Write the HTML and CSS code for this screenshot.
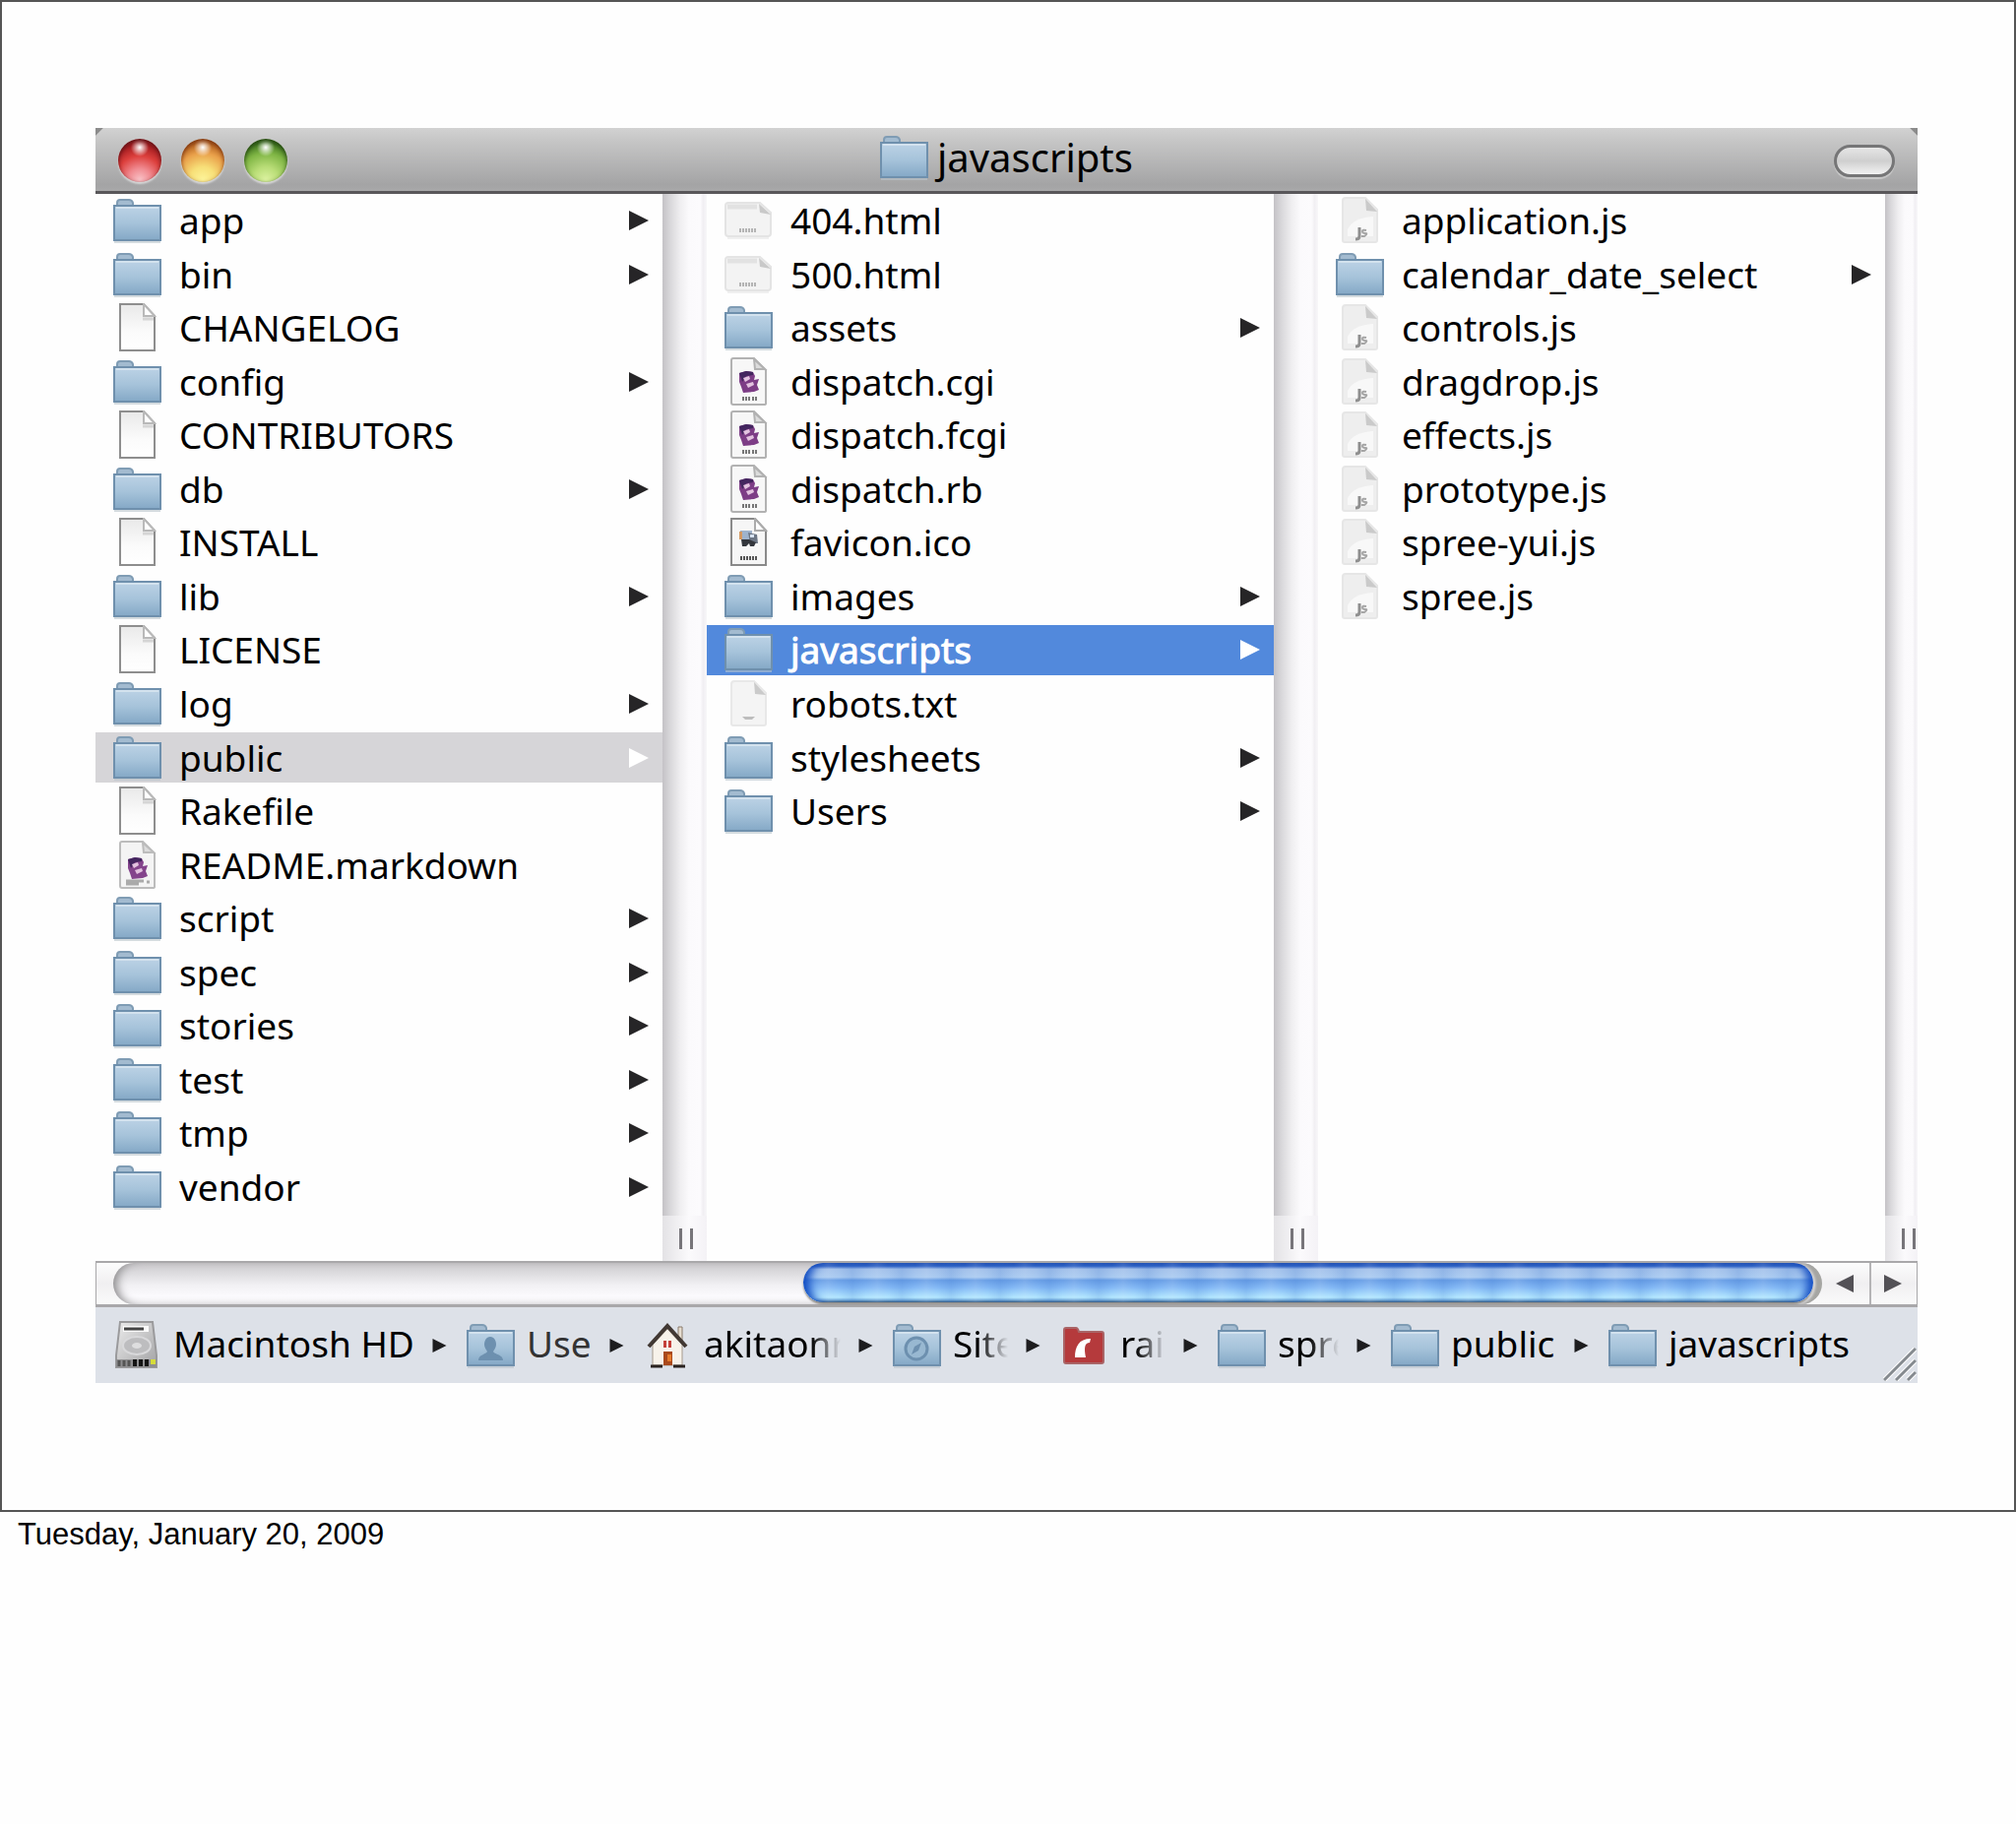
FILE: index.html
```html
<!DOCTYPE html>
<html lang="en">
<head>
<meta charset="utf-8">
<title>javascripts</title>
<link rel="stylesheet" href="styles.css">
</head>
<body>
<svg class="defs" aria-hidden="true">
  <defs>
    <linearGradient id="g-folder" x1="0" y1="0" x2="0" y2="1">
      <stop offset="0" stop-color="#bdd3e6"/><stop offset=".5" stop-color="#a6c3da"/><stop offset="1" stop-color="#84a8c6"/>
    </linearGradient>
    <linearGradient id="g-doc" x1="0" y1="0" x2="0" y2="1">
      <stop offset="0" stop-color="#e9e9e9"/><stop offset=".6" stop-color="#fbfbfb"/><stop offset="1" stop-color="#ffffff"/>
    </linearGradient>
    <linearGradient id="g-disk" x1="0" y1="0" x2="1" y2="1">
      <stop offset="0" stop-color="#ececec"/><stop offset="1" stop-color="#a2a2a4"/>
    </linearGradient>
    <symbol id="folder" viewBox="0 0 50 50">
      <path d="M1 47h47" stroke="#b9c4cc" stroke-width="2" opacity=".6"/>
      <path d="M4 10V7q0-3 3-3h9q3 0 4 3v3z" fill="#a3bbd0" stroke="#7f9cb4" stroke-width="2"/>
      <path d="M1 10h47v35H1z" fill="url(#g-folder)" stroke="#6f90ad" stroke-width="2"/>
      <path d="M3 12h43" stroke="#d3e2ee" stroke-width="2"/>
    </symbol>
    <symbol id="folder-user" viewBox="0 0 50 50">
      <use href="#folder" width="50" height="50"/>
      <path d="M24 16c4 0 6 4 6 8 0 3-2 5-3 7 1 3 10 3 10 9H12c0-6 8-6 9-9-1-2-3-4-3-7 0-4 2-8 6-8z" fill="#6d90af"/>
    </symbol>
    <symbol id="folder-sites" viewBox="0 0 50 50">
      <use href="#folder" width="50" height="50"/>
      <circle cx="24" cy="28" r="11" fill="#98b8d1" stroke="#6d90af" stroke-width="3"/>
      <path d="M29 22l-3 8-7 4 3-8z" fill="#6d90af"/>
    </symbol>
    <symbol id="folder-rails" viewBox="0 0 50 50">
      <path d="M4 12V9q0-2 2-2h10q2 0 3 4h23q2 0 2 2v28q0 2-2 2H6q-2 0-2-2z" fill="#b53a3c" stroke="#a96466" stroke-width="2"/>
      <path d="M15 37c0-11 4-19 16-19l-1 4c-5 0-6 5-4 15z" fill="#fff"/>
    </symbol>
    <symbol id="doc" viewBox="0 0 50 50">
      <path d="M7 1h24l11 12v35H7z" fill="url(#g-doc)" stroke="#8e8e8e" stroke-width="2"/>
      <path d="M31 1v12h11z" fill="#fff" stroke="#b9b9b9" stroke-width="2"/>
      <path d="M30 16h11" stroke="#d5d5d5" stroke-width="3"/>
    </symbol>
    <symbol id="ruby" viewBox="0 0 50 50">
      <path d="M9 1h21l12 12v34q0 1-2 1H9q-2 0-2-2V3q0-2 2-2z" fill="#f7f7f7" stroke="#b2b2b2" stroke-width="2"/>
      <path d="M30 2l1 10h10z" fill="#dcdcdc" stroke="#b2b2b2" stroke-width="2"/>
      <path d="M15 16l7-2 7 1 2 4-1 4 5-1-2 6 2 5-5 2-11 1-2-6-2-5z" fill="#7d3d86"/>
      <path d="M15 16l7-2 7 1v3l-7 1-4 6z" fill="#43265f"/>
      <path d="M19 21l6-2 1 3-5 3zM22 27l7-2 1 3-6 3z" fill="#e3c3e0"/>
      <path d="M19 40v4M22 40v4M25 40v4M29 40v4M32 40v4" stroke="#777" stroke-width="2"/>
    </symbol>
    <symbol id="markdown" viewBox="0 0 50 50">
      <path d="M9 1h21l12 12v34q0 1-2 1H9q-2 0-2-2V3q0-2 2-2z" fill="#f4f4f4" stroke="#bcbcbc" stroke-width="2"/>
      <path d="M30 2l1 10h10z" fill="#dcdcdc" stroke="#bcbcbc" stroke-width="2"/>
      <path d="M15 19l7-2 7 1 2 4-1 4 5-1-2 6 2 5-5 2-11 1-2-6-2-5z" fill="#84448c"/>
      <path d="M15 19l7-2 7 1v3l-7 1-4 6z" fill="#43265f"/>
      <path d="M19 24l6-2 1 3-5 3zM22 30l7-2 1 3-6 3z" fill="#e3c3e0"/>
      <path d="M13 41h18M13 44h13M34 42h3" stroke="#aaa" stroke-width="3"/>
    </symbol>
    <symbol id="ico" viewBox="0 0 50 50">
      <path d="M7 1h24l11 12v35H7z" fill="#f6f6f6" stroke="#8a8a8a" stroke-width="2"/>
      <path d="M31 1v12h11z" fill="#fff" stroke="#ababab" stroke-width="2"/>
      <path d="M16 13h12v9H16z" fill="#9fb3cc"/>
      <path d="M15 14h3v8h-3z" fill="#d59a63"/>
      <path d="M24 15l9 2 1 9h-8z" fill="#6c7685"/>
      <path d="M17 22h8l7 3-2 4h-4l-1-3-3 3h-4z" fill="#33363c"/>
      <path d="M26 17h4v3h-4z" fill="#d7e3f2"/>
      <path d="M17 39v4M20 39v4M23 39v4M26 39v4M29 39v4M32 39v4" stroke="#555" stroke-width="2"/>
    </symbol>
    <symbol id="html" viewBox="0 0 50 50">
      <path d="M4 7h32l11 10v21q0 3-3 3H4q-3 0-3-3V10q0-3 3-3z" fill="#f3f3f3" stroke="#e4e4e4" stroke-width="2"/>
      <path d="M35 8l1 9 11 2z" fill="#c9c9c9"/>
      <path d="M3 11h30" stroke="#e2e2e2" stroke-width="5"/>
      <path d="M16 33v4M19 33v4M22 33v4M25 33v4M28 33v4M31 33v4" stroke="#b4b4b4" stroke-width="2"/>
      <path d="M3 43h42" stroke="#f0f0f0" stroke-width="2"/>
    </symbol>
    <symbol id="js" viewBox="0 0 50 50">
      <path d="M10 2h20l12 12v31q0 2-2 2H9q-2 0-2-2V5q0-3 3-3z" fill="#eeeeee" stroke="#e6e6e6" stroke-width="2"/>
      <path d="M12 34q6-12 26-13v20H12z" fill="#f8f8f8"/>
      <path d="M30 3l1 12 11 1z" fill="#cacaca"/>
      <path d="M24 32v9q0 3-4 3" fill="none" stroke="#8f8f8f" stroke-width="3"/>
      <path d="M31 35q-4-1-4 1t3 2-1 3h-3" fill="none" stroke="#a5a5a5" stroke-width="2"/>
    </symbol>
    <symbol id="txt" viewBox="0 0 50 50">
      <path d="M10 2h20l12 12v31q0 2-2 2H9q-2 0-2-2V5q0-3 3-3z" fill="#f4f4f4" stroke="#e8e8e8" stroke-width="2"/>
      <path d="M30 3l1 12 11 1z" fill="#cacaca"/>
      <path d="M18 38h13l-3 3h-7z" fill="#bdbdbd"/>
    </symbol>
    <symbol id="disk" viewBox="0 0 50 50">
      <path d="M7 1h33l4 34v12H3V35z" fill="url(#g-disk)" stroke="#9a9a9c" stroke-width="2"/>
      <path d="M10 5h26v6H10z" fill="#fafafa"/>
      <path d="M11 8h20" stroke="#444" stroke-width="3"/>
      <ellipse cx="24" cy="25" rx="14" ry="9" fill="#bdbdbf" stroke="#d9d9db" stroke-width="2"/>
      <ellipse cx="24" cy="25" rx="5" ry="3" fill="#dededf"/>
      <path d="M3 39h41v8H3z" fill="#8e8e90"/>
      <path d="M6 40v6M11 40v6M16 40v6" stroke="#555" stroke-width="3"/>
      <path d="M20 39h4v7h-4zM26 39h4v7h-4zM32 39h4v7h-4z" fill="#141414"/>
      <path d="M38 39h5v5h-5z" fill="#d6dc3a"/>
    </symbol>
    <symbol id="house" viewBox="0 0 50 50">
      <path d="M35 6h4v14h-4z" fill="#e6ddd0" stroke="#8a7a6a"/>
      <path d="M9 24L24 8l15 16v21H9z" fill="#f7f2ea" stroke="#a69a8c"/>
      <path d="M5 26L24 5l19 21" fill="none" stroke="#413833" stroke-width="4"/>
      <path d="M20 20h3v7h-3zM25 20h3v7h-3z" fill="#c4403a"/>
      <path d="M20 31h9v14h-9z" fill="#a9491c"/>
      <path d="M24 34h4v7h-4z" fill="#e57a2c"/>
      <path d="M7 46h12M30 46h12" stroke="#2a2320" stroke-width="3"/>
    </symbol>
    <symbol id="arrow" viewBox="0 0 20 20"><path d="M0 0l20 10L0 20z" fill="currentColor"/></symbol>
    <symbol id="arrow-left" viewBox="0 0 20 20"><path d="M20 0L0 10l20 10z" fill="currentColor"/></symbol>
  </defs>
</svg>

<main class="slide">
  <section class="window">
    <header class="titlebar">
      <div class="lights">
        <button class="light red" aria-label="Close"></button>
        <button class="light amber" aria-label="Minimize"></button>
        <button class="light green" aria-label="Zoom"></button>
      </div>
      <h1 class="title"><svg class="icon"><use href="#folder"/></svg><span>javascripts</span></h1>
      <button class="pill" aria-label="Toggle toolbar"></button>
    </header>

    <div class="columns">
      <ul class="list">
        <li><a class="row" href="#"><svg class="icon"><use href="#folder"/></svg><span class="name">app</span><svg class="more"><use href="#arrow"/></svg></a></li>
        <li><a class="row" href="#"><svg class="icon"><use href="#folder"/></svg><span class="name">bin</span><svg class="more"><use href="#arrow"/></svg></a></li>
        <li><a class="row" href="#"><svg class="icon"><use href="#doc"/></svg><span class="name">CHANGELOG</span></a></li>
        <li><a class="row" href="#"><svg class="icon"><use href="#folder"/></svg><span class="name">config</span><svg class="more"><use href="#arrow"/></svg></a></li>
        <li><a class="row" href="#"><svg class="icon"><use href="#doc"/></svg><span class="name">CONTRIBUTORS</span></a></li>
        <li><a class="row" href="#"><svg class="icon"><use href="#folder"/></svg><span class="name">db</span><svg class="more"><use href="#arrow"/></svg></a></li>
        <li><a class="row" href="#"><svg class="icon"><use href="#doc"/></svg><span class="name">INSTALL</span></a></li>
        <li><a class="row" href="#"><svg class="icon"><use href="#folder"/></svg><span class="name">lib</span><svg class="more"><use href="#arrow"/></svg></a></li>
        <li><a class="row" href="#"><svg class="icon"><use href="#doc"/></svg><span class="name">LICENSE</span></a></li>
        <li><a class="row" href="#"><svg class="icon"><use href="#folder"/></svg><span class="name">log</span><svg class="more"><use href="#arrow"/></svg></a></li>
        <li><a class="row open" href="#"><svg class="icon"><use href="#folder"/></svg><span class="name">public</span><svg class="more"><use href="#arrow"/></svg></a></li>
        <li><a class="row" href="#"><svg class="icon"><use href="#doc"/></svg><span class="name">Rakefile</span></a></li>
        <li><a class="row" href="#"><svg class="icon"><use href="#markdown"/></svg><span class="name">README.markdown</span></a></li>
        <li><a class="row" href="#"><svg class="icon"><use href="#folder"/></svg><span class="name">script</span><svg class="more"><use href="#arrow"/></svg></a></li>
        <li><a class="row" href="#"><svg class="icon"><use href="#folder"/></svg><span class="name">spec</span><svg class="more"><use href="#arrow"/></svg></a></li>
        <li><a class="row" href="#"><svg class="icon"><use href="#folder"/></svg><span class="name">stories</span><svg class="more"><use href="#arrow"/></svg></a></li>
        <li><a class="row" href="#"><svg class="icon"><use href="#folder"/></svg><span class="name">test</span><svg class="more"><use href="#arrow"/></svg></a></li>
        <li><a class="row" href="#"><svg class="icon"><use href="#folder"/></svg><span class="name">tmp</span><svg class="more"><use href="#arrow"/></svg></a></li>
        <li><a class="row" href="#"><svg class="icon"><use href="#folder"/></svg><span class="name">vendor</span><svg class="more"><use href="#arrow"/></svg></a></li>
      </ul>
      <div class="divider"><div class="grip"><i></i><i></i></div></div>
      <ul class="list">
        <li><a class="row" href="#"><svg class="icon"><use href="#html"/></svg><span class="name">404.html</span></a></li>
        <li><a class="row" href="#"><svg class="icon"><use href="#html"/></svg><span class="name">500.html</span></a></li>
        <li><a class="row" href="#"><svg class="icon"><use href="#folder"/></svg><span class="name">assets</span><svg class="more"><use href="#arrow"/></svg></a></li>
        <li><a class="row" href="#"><svg class="icon"><use href="#ruby"/></svg><span class="name">dispatch.cgi</span></a></li>
        <li><a class="row" href="#"><svg class="icon"><use href="#ruby"/></svg><span class="name">dispatch.fcgi</span></a></li>
        <li><a class="row" href="#"><svg class="icon"><use href="#ruby"/></svg><span class="name">dispatch.rb</span></a></li>
        <li><a class="row" href="#"><svg class="icon"><use href="#ico"/></svg><span class="name">favicon.ico</span></a></li>
        <li><a class="row" href="#"><svg class="icon"><use href="#folder"/></svg><span class="name">images</span><svg class="more"><use href="#arrow"/></svg></a></li>
        <li><a class="row selected" href="#"><svg class="icon"><use href="#folder"/></svg><span class="name">javascripts</span><svg class="more"><use href="#arrow"/></svg></a></li>
        <li><a class="row" href="#"><svg class="icon"><use href="#txt"/></svg><span class="name">robots.txt</span></a></li>
        <li><a class="row" href="#"><svg class="icon"><use href="#folder"/></svg><span class="name">stylesheets</span><svg class="more"><use href="#arrow"/></svg></a></li>
        <li><a class="row" href="#"><svg class="icon"><use href="#folder"/></svg><span class="name">Users</span><svg class="more"><use href="#arrow"/></svg></a></li>
      </ul>
      <div class="divider"><div class="grip"><i></i><i></i></div></div>
      <ul class="list">
        <li><a class="row" href="#"><svg class="icon"><use href="#js"/></svg><span class="name">application.js</span></a></li>
        <li><a class="row" href="#"><svg class="icon"><use href="#folder"/></svg><span class="name">calendar_date_select</span><svg class="more"><use href="#arrow"/></svg></a></li>
        <li><a class="row" href="#"><svg class="icon"><use href="#js"/></svg><span class="name">controls.js</span></a></li>
        <li><a class="row" href="#"><svg class="icon"><use href="#js"/></svg><span class="name">dragdrop.js</span></a></li>
        <li><a class="row" href="#"><svg class="icon"><use href="#js"/></svg><span class="name">effects.js</span></a></li>
        <li><a class="row" href="#"><svg class="icon"><use href="#js"/></svg><span class="name">prototype.js</span></a></li>
        <li><a class="row" href="#"><svg class="icon"><use href="#js"/></svg><span class="name">spree-yui.js</span></a></li>
        <li><a class="row" href="#"><svg class="icon"><use href="#js"/></svg><span class="name">spree.js</span></a></li>
      </ul>
      <div class="divider"><div class="grip"><i></i><i></i></div></div>
    </div>

    <div class="scrollbar">
      <div class="track"><div class="thumb"></div></div>
      <button class="step" aria-label="Scroll left"><svg><use href="#arrow-left"/></svg></button>
      <button class="step" aria-label="Scroll right"><svg><use href="#arrow"/></svg></button>
    </div>

    <footer class="pathbar">
      <nav class="path" aria-label="Path">
        <a class="crumb" href="#"><svg class="icon"><use href="#disk"/></svg><span class="label disk">Macintosh HD</span></a>
        <svg class="sep"><use href="#arrow"/></svg>
        <a class="crumb" href="#"><svg class="icon"><use href="#folder-user"/></svg><span class="label users">Use</span></a>
        <svg class="sep"><use href="#arrow"/></svg>
        <a class="crumb" href="#"><svg class="icon"><use href="#house"/></svg><span class="label cut home">akitaonr</span></a>
        <svg class="sep"><use href="#arrow"/></svg>
        <a class="crumb" href="#"><svg class="icon"><use href="#folder-sites"/></svg><span class="label cut sites">Site</span></a>
        <svg class="sep"><use href="#arrow"/></svg>
        <a class="crumb" href="#"><svg class="icon"><use href="#folder-rails"/></svg><span class="label cut rails">rai</span></a>
        <svg class="sep"><use href="#arrow"/></svg>
        <a class="crumb" href="#"><svg class="icon"><use href="#folder"/></svg><span class="label cut spree">spre</span></a>
        <svg class="sep"><use href="#arrow"/></svg>
        <a class="crumb" href="#"><svg class="icon"><use href="#folder"/></svg><span class="label public">public</span></a>
        <svg class="sep"><use href="#arrow"/></svg>
        <a class="crumb" href="#"><svg class="icon"><use href="#folder"/></svg><span class="label">javascripts</span></a>
      </nav>
      <svg class="resize" viewBox="0 0 34 34"><path d="M1 33L33 1M13 33l20-20M25 33l8-8" stroke="#fff" stroke-width="5"/><path d="M1 33L33 1M13 33l20-20M25 33l8-8" stroke="#858a8f" stroke-width="3"/></svg>
    </footer>
  </section>
</main>
<p class="date">Tuesday, January 20, 2009</p>
</body>
</html>
```
FILE: styles.css
```css
* { box-sizing: border-box; }

body {
  margin: 0;
  background: #fefefe;
  color: #000;
  font-family: "Noto Sans", "Open Sans", sans-serif;
  font-size: 37px;
  line-height: 48px;
}

a { color: inherit; text-decoration: none; }
button { padding: 0; border: 0; background: none; }
ul { margin: 0; padding: 0; list-style: none; }
.defs { position: absolute; width: 0; height: 0; }
.icon { flex: none; width: 50px; height: 50px; }

.slide {
  padding: 128px 98px 129px 95px;
  border: 2px solid #555;
  background: #fefefe;
}

.window { display: flex; flex-direction: column; }

/* Title bar */
.titlebar {
  display: grid;
  grid-template-columns: 1fr auto 1fr;
  align-items: center;
  height: 67px;
  padding: 2px 23px 0;
  border-bottom: 3px solid #59575a;
  background:
    linear-gradient(135deg, #8b8b8b 5px, #8b8b8b00 6px),
    linear-gradient(225deg, #8b8b8b 5px, #8b8b8b00 6px),
    linear-gradient(#d2d2d2, #c6c6c6 20%, #a4a4a5 90%, #a8a8a9);
}
.lights { display: flex; gap: 20px; }
.light {
  width: 44px;
  height: 44px;
  border-radius: 50%;
}
.red {
  background:
    radial-gradient(circle at 50% 20%, #fff 0, #fff0 22%),
    radial-gradient(circle at 50% 95%, #f9c3c8 0, #f08a90 25%, #dc3f3c 52%, #a31c20 76%);
  box-shadow: inset 0 2px 4px #5a1216, 0 2px 2px #d8d8d8;
}
.amber {
  background:
    radial-gradient(circle at 50% 20%, #fff 0, #fff0 22%),
    radial-gradient(circle at 50% 95%, #fdf49a 0, #f7df78 28%, #e9a04a 58%, #b3601f 80%);
  box-shadow: inset 0 2px 4px #7a3410, 0 2px 2px #d8d8d8;
}
.green {
  background:
    radial-gradient(circle at 50% 20%, #fff 0, #fff0 22%),
    radial-gradient(circle at 50% 95%, #dcf2a0 0, #b9dd77 28%, #7fb544 58%, #3f7420 80%);
  box-shadow: inset 0 2px 4px #22420f, 0 2px 2px #d8d8d8;
}
.title {
  display: flex;
  align-items: center;
  gap: 8px;
  margin: 0;
  padding-bottom: 6px;
  font-size: 40px;
  font-weight: 400;
}
.pill {
  justify-self: end;
  width: 62px;
  height: 33px;
  border: 3px solid #767677;
  border-radius: 17px;
  background: linear-gradient(#e6e6e6, #cfcfcf 50%, #f2f2f2);
  box-shadow: 0 2px 1px #c9c9c9;
}

/* File columns */
.columns {
  display: grid;
  grid-template-columns: 1fr 45px 1fr 45px 1fr 33px;
}
.list {
  display: grid;
  grid-template-rows: repeat(19, 1fr);
  height: 1084px;
  padding-bottom: 48px;
}
.list li {
  display: flex;
  align-items: center;
  min-height: 0;
}
.row {
  display: flex;
  flex: 1;
  align-items: center;
  gap: 17px;
  height: 51px;
  padding: 0 14px 0 18px;
}
.name { flex: 1; white-space: nowrap; }
.more { width: 20px; height: 20px; color: #262527; }
.open { background: #d6d5d8; }
.open .more { color: #fff; }
.selected { background: #5289dc; color: #fff; }
.selected .more { color: #fff; }
.selected .name { -webkit-text-stroke: 1px #fff; }

.divider {
  display: flex;
  align-items: flex-end;
  overflow: hidden;
  background: linear-gradient(90deg, #c4c2c6, #d9d8db 18%, #efeef0 40%, #fbfafc 60%, #fcfbfd 85%, #f1eff3 92%, #f8f7f9);
}
.grip {
  display: flex;
  flex: 1;
  gap: 8px;
  height: 46px;
  padding: 13px 0 12px 17px;
  background: linear-gradient(90deg, #e3e2e5, #fbfafc 60%, #f4f2f6);
}
.grip i { width: 3px; background: #77757a; }

/* Horizontal scrollbar */
.scrollbar {
  display: flex;
  height: 47px;
  border: solid #a9a8aa;
  border-width: 2px 1px 3px;
  background: linear-gradient(#fcfcfc, #f0eff1 50%, #fafafa);
}
.track {
  display: flex;
  flex: 1;
  justify-content: flex-end;
  margin-left: 17px;
  padding: 0 9px 2px 0;
  border-radius: 24px;
  background: linear-gradient(#cbc9cc, #dddcdf 25%, #f2f1f4 55%, #fbfafd 80%, #f3f2f4);
  box-shadow: inset 8px 0 10px -4px #8f8e90, inset -9px 0 3px -2px #a5a5a2;
}
.thumb {
  width: 59.4%;
  border-radius: 20px;
  background:
    repeating-linear-gradient(90deg, #2a68c826 0, #2a68c800 14px, #ffffff18 25px, #2a68c800 36px, #2a68c826 50px),
    linear-gradient(#2a54b2, #2f62c4 8%, #a3c1ea 16%, #a9caf1 36%, #6ba0e6 44%, #83b8f5 62%, #b4e8ff 88%, #7fb4dc 94%, #3f5f78);
  box-shadow: inset 12px 0 10px -6px #104bc2, inset -12px 0 10px -6px #104bc2, 0 2px 2px #8c8a86;
}
.step {
  display: grid;
  place-items: center;
  width: 48px;
  padding-right: 3px;
  color: #535156;
}
.step + .step { border-left: 2px solid #b5b4b6; }
.step svg { width: 18px; height: 20px; }

/* Path bar */
.pathbar {
  display: flex;
  justify-content: space-between;
  height: 77px;
  padding: 0 1px 0 18px;
  background: #dde1e8;
}
.path { display: flex; align-items: center; gap: 20px; }
.crumb { display: flex; align-items: center; gap: 11px; }
.label { padding-bottom: 4px; white-space: nowrap; }
/* Shortened names fade out before the next separator */
.cut {
  margin-right: -18px;
  -webkit-mask-image: linear-gradient(90deg, #000 calc(100% - 46px), transparent calc(100% - 16px));
  mask-image: linear-gradient(90deg, #000 calc(100% - 46px), transparent calc(100% - 16px));
}
.disk { width: 243px; }
.users { width: 64px; color: #333; }
.home { width: 155px; }
.sites { width: 72px; }
.rails { width: 62px; }
.spree { width: 78px; }
.public { width: 105px; }
.sep { flex: none; width: 15px; height: 14px; color: #1d1d1f; }
.resize { align-self: flex-end; width: 34px; height: 34px; margin-bottom: 2px; }

.date {
  margin: 0;
  padding: 0 18px;
  font-family: "Liberation Sans", Arial, sans-serif;
  font-size: 31px;
  line-height: 46px;
}
```
